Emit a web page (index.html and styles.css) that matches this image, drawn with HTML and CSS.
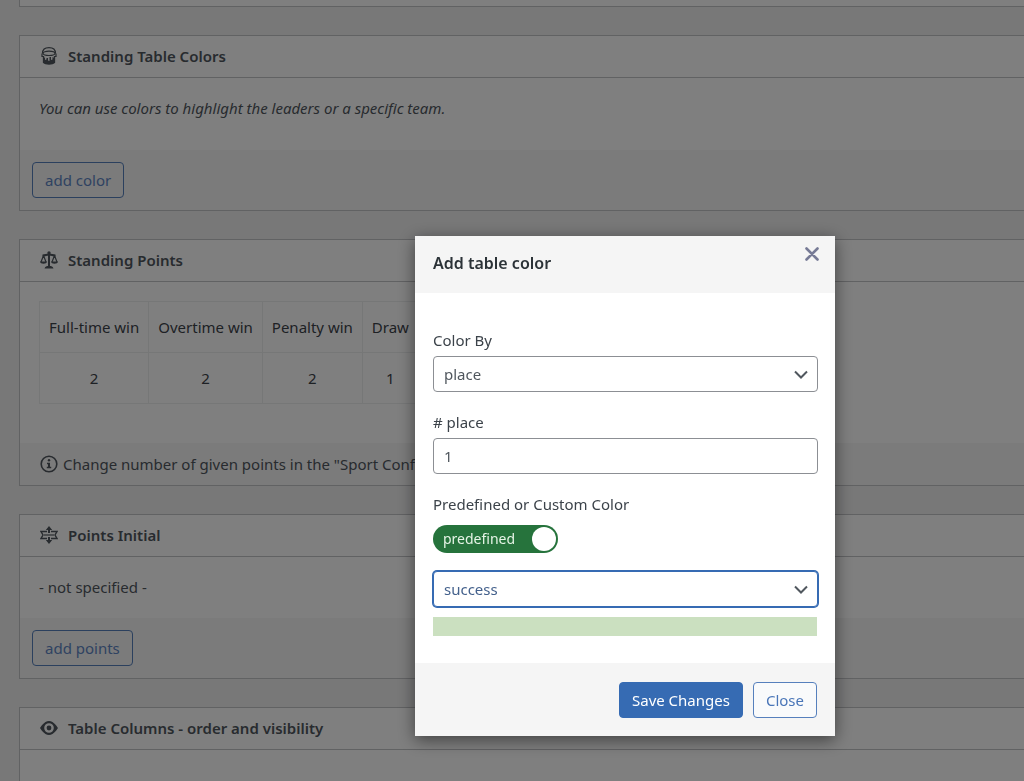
FILE: index.html
```html
<!DOCTYPE html>
<html lang="en">
<head>
    <meta charset="UTF-8">
    <meta name="viewport" content="width=device-width, initial-scale=1">
    <title>Standing Table</title>
    <link rel="stylesheet" href="styles.css">
</head>
<body>
    <main class="page">
        <!-- End of the previous panel -->
        <div class="panel panel-end"></div>

        <!-- Colors -->
        <section class="panel">
            <h2 class="panel-header">
                <svg class="icon" viewBox="0 0 18 18" fill="none" stroke="currentColor" aria-hidden="true">
                    <path d="M2.500 6.500C2.500 2.500 5.200.700 9 .700s6.500 1.800 6.500 5.800" stroke-width="1.200"/>
                    <ellipse cx="9" cy="6.300" rx="6" ry="2.200" stroke-width="1.200"/>
                    <path d="M2 6.500v3h1M16 6.500v3h-1" stroke-width="1.200"/>
                    <path d="M3.500 9v6.500c2 2 9 2 11 0V9" stroke-width="1.300"/>
                    <path d="M3.500 12l1.500-2v3l1.500-.5V11H8v2.500l1.500.5v-4H11v3l1.500-.5V10l2 1v4.500c-2 2-9 2-11 0z" fill="currentColor" stroke="none"/>
                </svg>
                Standing Table Colors
            </h2>
            <div class="panel-body">
                <p class="hint">You can use colors to highlight the leaders or a specific team.</p>
            </div>
            <div class="panel-footer">
                <button type="button" class="btn">add color</button>
            </div>
        </section>

        <!-- Points -->
        <section class="panel">
            <h2 class="panel-header">
                <svg class="icon" viewBox="0 0 18 18" fill="none" stroke="currentColor" aria-hidden="true">
                    <circle cx="9" cy="2" r="1.700" fill="currentColor" stroke="none"/>
                    <path d="M9 2v13.500M2.500 4.500c3 0 3.500-1 6.500-1s3.500 1 6.500 1" stroke-width="2"/>
                    <path d="M4.500 17.500c.5-2 2-2.500 4.500-2.500s4 .5 4.500 2.500z" fill="currentColor" stroke="none"/>
                    <path d="M3.500 4.500L1 11M3.500 4.500L6 11M14.500 4.500L12 11M14.500 4.500L17 11" stroke-width="1.200"/>
                    <path d="M0 10.500h7c0 3-7 3-7 0zM11 10.500h7c0 3-7 3-7 0z" fill="currentColor" stroke="none"/>
                </svg>
                Standing Points
            </h2>
            <div class="panel-body points-body">
                <table class="points">
                    <thead>
                        <tr>
                            <th>Full-time win</th>
                            <th>Overtime win</th>
                            <th>Penalty win</th>
                            <th>Draw</th>
                        </tr>
                    </thead>
                    <tbody>
                        <tr>
                            <td>2</td>
                            <td>2</td>
                            <td>2</td>
                            <td>1</td>
                        </tr>
                    </tbody>
                </table>
            </div>
            <div class="panel-footer panel-note">
                <svg class="icon" viewBox="0 0 18 18" aria-hidden="true">
                    <circle cx="9" cy="9" r="7.800" fill="none" stroke="currentColor" stroke-width="1.600"/>
                    <circle cx="9" cy="5.200" r="1.200" fill="currentColor"/>
                    <path d="M7 7.700h3v4h1.200v1.500H6.800v-1.500H8V9.200H7z" fill="currentColor"/>
                </svg>
                Change number of given points in the "Sport Config"
            </div>
        </section>

        <!-- Initial points -->
        <section class="panel">
            <h2 class="panel-header">
                <svg class="icon" viewBox="0 0 18 18" fill="none" stroke="currentColor" aria-hidden="true">
                    <path d="M9 0l3.200 4H5.800zM9 18l3.200-4H5.800z" fill="currentColor" stroke="none"/>
                    <path d="M9 2v5M9 11v5" stroke-width="2"/>
                    <path d="M4 9h10" stroke-width="1.200"/>
                    <path d="M7 5.500H1L3 9l-2 3.500h6M11 5.500h6L15 9l2 3.500h-6" stroke-width="1.400"/>
                </svg>
                Points Initial
            </h2>
            <div class="panel-body initial-body">
                <p>- not specified -</p>
            </div>
            <div class="panel-footer">
                <button type="button" class="btn">add points</button>
            </div>
        </section>

        <!-- Columns -->
        <section class="panel panel-columns">
            <h2 class="panel-header">
                <svg class="icon" viewBox="0 0 18 18" aria-hidden="true">
                    <path fill="currentColor" fill-rule="evenodd" d="M9 2C4 2 0 9 0 9s4 7 9 7 9-7 9-7-4-7-9-7zm0 11.800A4.800 4.800 0 1 1 9 4.200a4.800 4.800 0 0 1 0 9.600z"/>
                    <circle cx="9" cy="9" r="2.400" fill="currentColor"/>
                </svg>
                Table Columns - order and visibility
            </h2>
        </section>
    </main>

    <!-- Modal -->
    <div class="overlay">
        <form class="modal" role="dialog" aria-labelledby="modalTitle">
            <div class="modal-header">
                <h2 id="modalTitle">Add table color</h2>
                <button type="button" class="modal-close" aria-label="Close dialog">
                    <svg viewBox="0 0 14 14" width="14" height="14" fill="none" stroke="currentColor" stroke-width="2.600" stroke-linecap="round" aria-hidden="true">
                        <path d="M1.500 1.500l11 11M12.500 1.500l-11 11"/>
                    </svg>
                </button>
            </div>
            <div class="modal-body">
                <div class="field">
                    <label for="colorBy">Color By</label>
                    <div class="select">
                        <select id="colorBy" name="colorBy">
                            <option>place</option>
                            <option>team</option>
                        </select>
                        <svg class="chevron" viewBox="0 0 14 9" aria-hidden="true"><path d="M1 1.500l6 6 6-6"/></svg>
                    </div>
                </div>
                <div class="field">
                    <label for="place"># place</label>
                    <input class="control" type="text" id="place" name="place" value="1">
                </div>
                <div class="field">
                    <span class="label">Predefined or Custom Color</span>
                    <label class="switch">
                        <input type="checkbox" name="predefined" checked>
                        <span>predefined</span>
                    </label>
                </div>
                <div class="select">
                    <select class="active" name="color" aria-label="Predefined color">
                        <option>success</option>
                        <option>info</option>
                        <option>warning</option>
                        <option>danger</option>
                    </select>
                    <svg class="chevron" viewBox="0 0 14 9" aria-hidden="true"><path d="M1 1.500l6 6 6-6"/></svg>
                </div>
                <div class="preview"></div>
            </div>
            <div class="modal-footer">
                <button type="button" class="btn btn-primary">Save Changes</button>
                <button type="button" class="btn">Close</button>
            </div>
        </form>
    </div>
</body>
</html>
```

FILE: styles.css
```css
* {
    box-sizing: border-box;
}

body {
    margin: 0;
    background-color: #f0f0f1;
    color: #50575e;
    font-family: "Noto Sans", "Open Sans", sans-serif;
    font-size: 15px;
    line-height: 24px;
}

h2,
p {
    margin: 0;
}

button,
input,
select {
    font: inherit;
}

/* Panels */
.page {
    display: flex;
    flex-direction: column;
    min-height: 100vh;
    padding-left: 19px;
}

.panel {
    background-color: #fff;
    border: 1px solid #c3c4c7;
    border-right: none;
    margin-bottom: 28px;
}

.panel-end {
    height: 7px;
    border-top: none;
}

.panel-columns {
    flex: 1;
    margin-bottom: 0;
    border-bottom: none;
}

.panel-header {
    display: flex;
    align-items: center;
    gap: 10px;
    height: 42px;
    padding: 0 20px 2px;
    border-bottom: 1px solid #c3c4c7;
    font-size: 15px;
    font-weight: 600;
}

.icon {
    flex: none;
    width: 18px;
    height: 18px;
}

.panel-body {
    padding: 18px 19px 30px;
}

.hint {
    font-style: italic;
}

.panel-footer {
    padding: 12px;
    background-color: #f6f6f6;
}

.points-body {
    padding: 19px 19px 39px;
}

.initial-body {
    padding-bottom: 19px;
}

.panel-note {
    display: flex;
    align-items: center;
    gap: 5px;
    height: 42px;
    padding: 0 20px;
}

/* Points table */
.points {
    border-collapse: collapse;
    color: #3c434a;
}

.points th,
.points td {
    height: 51px;
    padding: 0 9px;
    border: 1px solid #eceeef;
    font-weight: 400;
    text-align: center;
}

/* Buttons */
.btn {
    display: block;
    height: 36px;
    padding: 0 12px;
    border: 1px solid #5680bd;
    border-radius: 4px;
    background-color: #f9fafb;
    color: #4a76b8;
    cursor: pointer;
}

.panel-footer .btn {
    background-color: transparent;
    color: #5f86c4;
}

.btn-primary {
    border-color: #366bb3;
    background-color: #366bb3;
    color: #fff;
}

/* Modal */
.overlay {
    position: fixed;
    inset: 0;
    display: flex;
    align-items: center;
    justify-content: center;
    padding: 190px 0 0 226px;
    background-color: rgba(0, 0, 0, 0.5);
}

.modal {
    width: 420px;
    background-color: #fff;
    color: #3c434a;
    box-shadow: 0 4px 16px rgba(0, 0, 0, 0.5);
}

.modal-header {
    display: flex;
    justify-content: space-between;
    align-items: flex-start;
    padding: 10px 15px 12px 18px;
    background-color: #f5f5f5;
}

.modal-header h2 {
    padding: 5px 0 6px;
    color: #2c3338;
    font-size: 16px;
    font-weight: 600;
}

.modal-close {
    display: flex;
    padding: 1px;
    border: none;
    background: none;
    color: #777b96;
    cursor: pointer;
}

.modal-body {
    padding: 35px 17px 27px 18px;
}

.field {
    display: flex;
    flex-direction: column;
    align-items: flex-start;
    margin-bottom: 18px;
}

.control,
.select select {
    width: 100%;
    height: 36px;
    padding: 0 10px;
    border: 1px solid #8c8f94;
    border-radius: 4px;
    background-color: #fff;
    color: #50575e;
}

.control {
    margin-top: 4px;
}

.select {
    position: relative;
    width: 100%;
}

.field .select {
    margin-top: 4px;
}

.select select {
    display: block;
    appearance: none;
}

.select .active {
    border-color: #366bb3;
    box-shadow: 0 0 0 1px #366bb3;
    color: #44618c;
}

.chevron {
    position: absolute;
    top: 14px;
    right: 10px;
    width: 14px;
    height: 9px;
    fill: none;
    stroke: #50575e;
    stroke-width: 2;
    pointer-events: none;
}

/* Switch */
.switch {
    display: flex;
    align-items: center;
    justify-content: space-between;
    flex-direction: row-reverse;
    width: 125px;
    height: 28px;
    margin-top: 9px;
    padding: 0 2px 0 10px;
    border-radius: 14px;
    background-color: #26733c;
    color: #e6f4e6;
    font-size: 14px;
    cursor: pointer;
}

.switch input {
    width: 24px;
    height: 24px;
    margin: 0;
    appearance: none;
    border-radius: 50%;
    background-color: #fff;
}

.preview {
    height: 19px;
    margin: 10px 1px 0 0;
    background-color: #cbe0c0;
}

.modal-footer {
    display: flex;
    justify-content: flex-end;
    gap: 10px;
    padding: 19px 18px 18px;
    background-color: #f5f5f5;
}
```
